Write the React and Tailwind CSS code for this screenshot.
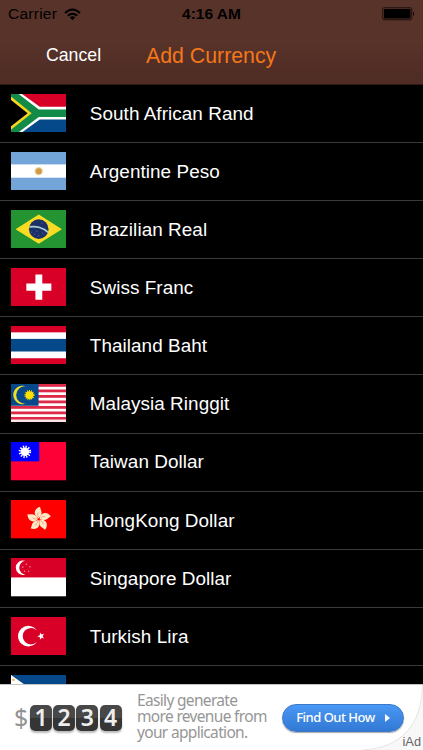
import React from 'react';

/**
 * Flag
 *
 * Frame shared by all flags, 55 x 38 units.
 */
function Flag({ color, children }) {
    return (
        <svg viewBox="0 0 55 38" preserveAspectRatio="none" className="block h-[38.3px] w-[55.5px] shrink-0">
            <rect width="55" height="38" fill={color} />
            {children}
        </svg>
    );
}

const SouthAfrica = () => (
    <Flag color="#fff">
        <path d="M11 0H55V12.6H28.5z" fill="#d80027" />
        <path d="M11 38H55V25.4H28.5z" fill="#05498a" />
        <path d="M0 0H7.5L27.5 15.3H55V22.7H27.5L7.5 38H0z" fill="#128a48" />
        <path d="M0 2.6L20.5 19L0 35.4z" fill="#f5d51d" />
        <path d="M0 6L16.5 19L0 32z" fill="#000" />
    </Flag>
);

const Argentina = () => (
    <Flag color="#73a5d8">
        <rect y="12.3" width="55" height="13.2" fill="#fff" />
        <circle cx="27.5" cy="19" r="4.1" fill="#ecd3a3" />
        <circle cx="27.5" cy="19" r="3" fill="#d09b45" />
    </Flag>
);

const Brazil = () => (
    <Flag color="#249432">
        <path d="M27.5 4.5L50.5 19L27.5 33.5L4.5 19z" fill="#f8dc23" />
        <circle cx="27.5" cy="19" r="9.7" fill="#1d2f68" />
        <path d="M18.3 16.8C25 15.6 32.5 17.6 36.8 22.2" fill="none" stroke="#a8cfcc" strokeWidth="1.7" />
        <path d="M20 22h1M23 24h1M27 25.5h1M31 23h1M25 21h1M30 13h1" stroke="#6580a5" strokeWidth=".8" />
    </Flag>
);

const Switzerland = () => (
    <Flag color="#d80027">
        <path d="M24.2 6.5h6.8v9h9v7h-9v9h-6.8v-9h-9v-7h9z" fill="#fff" />
    </Flag>
);

const Thailand = () => (
    <Flag color="#d80027">
        <rect y="6.3" width="55" height="25.7" fill="#fff" />
        <rect y="12.8" width="55" height="12.5" fill="#05498a" />
    </Flag>
);

const Malaysia = () => (
    <Flag color="#fff">
        {[0, 1, 2, 3, 4, 5, 6].map(i => (
            <rect key={i} y={i * 5.45} width="55" height="2.8" fill="#dc2a48" />
        ))}
        <rect y="35.4" width="55" height="2.6" fill="#fbe3e6" />
        <rect width="27.3" height="21.6" fill="#05498a" />
        <path d="M15 2.4A9.2 9.2 0 1 0 15 19.4A8.6 8.6 0 1 1 15 2.4z" fill="#f2df25" />
        <circle cx="18.3" cy="11" r="3.9" fill="#fee100" />
        <circle cx="18.3" cy="11" r="4.2" fill="none" stroke="#fee100" strokeWidth="1.6" strokeDasharray=".9 .98" />
    </Flag>
);

const Taiwan = () => (
    <Flag color="#fe0035">
        <rect width="28" height="19.2" fill="#0000fe" />
        <circle cx="13.8" cy="9.7" r="4.7" fill="none" stroke="#fff" strokeWidth="3" strokeDasharray="1.2 1.26" />
        <circle cx="13.8" cy="9.7" r="4.2" fill="#fff" />
    </Flag>
);

const HongKong = () => (
    <Flag color="#fe0000">
        {[0, 72, 144, 216, 288].map(angle => (
            <g key={angle} transform={`rotate(${angle} 27.6 19)`}>
                <path d="M27.4 18.2C21.7 15.5 22.3 8.6 28.9 6.8C28.4 9.4 33.2 12.5 27.4 18.2z" fill="#ffe9c4" />
                <path d="M27.3 17C26 15 26.2 13.5 27.2 12.3" fill="none" stroke="#f0704c" strokeWidth=".5" />
            </g>
        ))}
    </Flag>
);

const Singapore = () => (
    <Flag color="#fff">
        <rect width="55" height="19.3" fill="#d80027" />
        <path d="M14 2.8A7.2 7.2 0 1 0 14 16.6A7 7 0 0 1 14 2.8z" fill="#fff" />
        <g fill="#ee8295">
            <circle cx="15.3" cy="6.2" r=".8" />
            <circle cx="11.7" cy="9" r=".8" />
            <circle cx="18.8" cy="8.8" r=".8" />
            <circle cx="13.4" cy="13.2" r=".8" />
            <circle cx="17.5" cy="13.2" r=".8" />
        </g>
    </Flag>
);

const Turkey = () => (
    <Flag color="#d80027">
        <path d="M25.5 13.1A10.2 10.2 0 1 0 25.5 24.9A8.2 8.2 0 1 1 25.5 13.1z" fill="#fff" />
        <path d="M26 19L28.6 18L28.7 15.4L30.3 17.4L32.7 16.7L31.3 19L32.7 21.3L30.3 20.6L28.7 22.6L28.6 20z" fill="#fff" />
    </Flag>
);

const Philippines = () => (
    <Flag color="#05498a">
        <rect y="19" width="55" height="19" fill="#d80027" />
        <path d="M0 0L27 19L0 38z" fill="#fff" />
        <circle cx="2.4" cy="4.8" r="1.4" fill="#f0c060" />
    </Flag>
);

const currencies = [
    { name: 'South African Rand', flag: SouthAfrica },
    { name: 'Argentine Peso', flag: Argentina },
    { name: 'Brazilian Real', flag: Brazil },
    { name: 'Swiss Franc', flag: Switzerland },
    { name: 'Thailand Baht', flag: Thailand },
    { name: 'Malaysia Ringgit', flag: Malaysia },
    { name: 'Taiwan Dollar', flag: Taiwan },
    { name: 'HongKong Dollar', flag: HongKong },
    { name: 'Singapore Dollar', flag: Singapore },
    { name: 'Turkish Lira', flag: Turkey },
    { name: '', flag: Philippines },
];

/**
 * StatusBar
 */
function StatusBar() {
    return (
        <div className="grid h-7 grid-cols-3 items-center pr-[8px] pl-[8px] text-[15.5px] leading-none text-black">
            <div className="flex items-center gap-[7px]">
                <span className="tracking-[0.25px]">Carrier</span>
                <svg width="17" height="13" viewBox="0 0 17 13" fill="none" stroke="#000" strokeWidth="2">
                    <path d="M1 5Q8.5 -2 16 5" />
                    <path d="M3.8 7.8Q8.5 3.6 13.2 7.8" />
                    <path d="M5.8 9.3Q8.5 7.2 11.2 9.3L8.5 12.2z" fill="#000" stroke="none" />
                </svg>
            </div>
            <span className="text-center font-bold whitespace-nowrap">4:16 AM</span>
            <svg className="justify-self-end" width="33" height="14" viewBox="0 0 33 14">
                <rect x=".75" y=".75" width="29" height="12" rx="1.5" fill="none" stroke="#1c0f0c" />
                <rect x="2" y="2" width="26.5" height="9.5" rx=".5" fill="#000" />
                <path d="M31 4.5Q33 6.7 31 9z" fill="#000" />
            </svg>
        </div>
    );
}

/**
 * AdBanner
 */
function AdBanner() {
    return (
        <div className="relative flex h-[66px] shrink-0 overflow-hidden border-t border-[#c4c4c4] bg-white">
            <svg className="absolute right-0 bottom-0" width="60" height="65" viewBox="0 0 60 65">
                <path d="M60 0C59 40 38 63 0 65H60z" fill="#f8f8f9" />
                <path d="M59.5 0C59 40 38 63 0 65" fill="none" stroke="#e4e4e4" />
            </svg>
            <div className="flex h-[65px] w-[137px] shrink-0 items-center pl-[14px]">
                <span className="w-[16px] text-[25px] leading-none tracking-[-1px] text-[#929292] font-['Noto_Sans',sans-serif]">$</span>
                <div className="flex gap-[1.2px]">
                    {['1', '2', '3', '4'].map(digit => (
                        <span
                            key={digit}
                            className="flex h-[26px] w-[22px] items-center justify-center rounded-[5px] bg-linear-to-b from-[#484848] from-50% to-[#353535] to-50% text-[23px] leading-none font-semibold text-[#eee] shadow-[0_2px_2px_#bbb] font-['Noto_Sans',sans-serif]"
                        >
                            {digit}
                        </span>
                    ))}
                </div>
            </div>
            <p className="w-[145px] shrink-0 pt-[7px] text-[15.5px] leading-[16px] tracking-[-0.67px] whitespace-nowrap text-[#969696] font-['Noto_Sans',sans-serif]">
                <span className="block">Easily generate</span>
                <span className="block">more revenue from</span>
                <span className="block">your application.</span>
            </p>
            <button className="mt-[19px] flex h-[28px] w-[122px] shrink-0 items-center justify-center gap-[10px] rounded-full border border-[#3b78c8] bg-linear-to-b from-[#4998f5] to-[#3279d4] text-[13px] font-medium tracking-[-0.5px] whitespace-nowrap text-white shadow-[0_1px_1px_#aaa] font-['Noto_Sans',sans-serif]">
                Find Out How
                <svg width="5" height="8" viewBox="0 0 5 8"><path d="M0 0L5 4L0 8z" fill="#fff" /></svg>
            </button>
            <span className="absolute right-[2px] bottom-[1px] text-[12.8px] leading-none text-[#666] font-['Liberation_Sans',sans-serif]">iAd</span>
        </div>
    );
}

/**
 * App
 *
 * Currency picker: header, list of currencies and the ad at the bottom.
 */
export default function App() {
    return (
        <div className="flex h-[750px] w-[423px] flex-col overflow-hidden bg-black font-['Liberation_Sans',sans-serif]">
            <header className="h-[85px] shrink-0 border-b border-[#321a14] bg-linear-to-b from-[#57332a] from-50% to-[#4e2b23]">
                <StatusBar />
                <div className="flex h-14 items-center pl-[46px] leading-none">
                    <button className="w-[100px] text-left text-[17.7px] text-white">Cancel</button>
                    <h1 className="pt-[2px] text-[21.3px] text-[#f4771a]">Add Currency</h1>
                </div>
            </header>
            <ul className="min-h-0 flex-1 overflow-hidden">
                {currencies.map(({ name, flag: CurrencyFlag }) => (
                    <li key={name} className="flex h-[58.1px] items-start border-b border-[#3b3b3b] pt-[8.7px] pl-[10.7px]">
                        <CurrencyFlag />
                        <span className="pt-[11.2px] pl-[23.6px] text-[18.9px] leading-none tracking-[0.06px] text-white">{name}</span>
                    </li>
                ))}
            </ul>
            <AdBanner />
        </div>
    );
}
